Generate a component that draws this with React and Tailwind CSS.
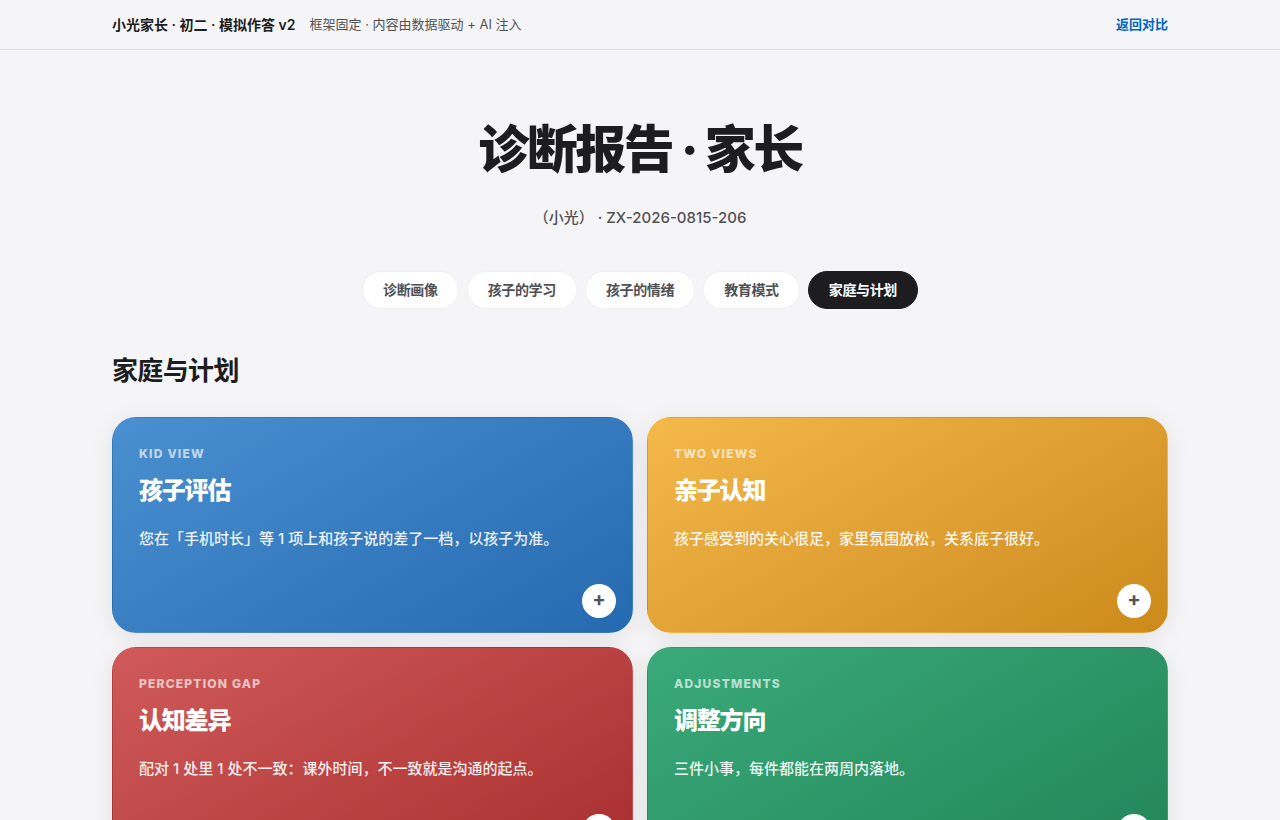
import React, { useState } from 'react';

const tabs = ['诊断画像', '孩子的学习', '孩子的情绪', '教育模式', '家庭与计划'];

const cards = [
  {
    label: 'Kid view',
    title: '孩子评估',
    text: '您在「手机时长」等 1 项上和孩子说的差了一档，以孩子为准。',
    color: 'from-[#4a90d0] to-[#2569b0]',
  },
  {
    label: 'Two views',
    title: '亲子认知',
    text: '孩子感受到的关心很足，家里氛围放松，关系底子很好。',
    color: 'from-[#f5b84a] to-[#cc8a1a]',
  },
  {
    label: 'Perception gap',
    title: '认知差异',
    text: '配对 1 处里 1 处不一致：课外时间，不一致就是沟通的起点。',
    color: 'from-[#d05a5a] to-[#a82e2e]',
  },
  {
    label: 'Adjustments',
    title: '调整方向',
    text: '三件小事，每件都能在两周内落地。',
    color: 'from-[#3aaa7a] to-[#228558]',
  },
];

const Card = ({ card }) => {
  return (
    <article
      className={`relative min-h-[216px] rounded-3xl border border-transparent bg-linear-150 px-[26px] py-7 text-white shadow-[0_4px_24px_rgba(0,0,0,0.08)] ${card.color}`}
    >
      <p className="text-xs leading-4 font-extrabold tracking-widest uppercase opacity-65">{card.label}</p>
      <h3 className="mt-3 text-2xl leading-[34px] font-extrabold tracking-tighter">{card.title}</h3>
      <p className="mt-[18px] text-[15px] leading-[26px] font-medium opacity-90">{card.text}</p>
      <button
        type="button"
        aria-label={`展开${card.title}`}
        className="absolute right-4 bottom-3.5 flex size-[34px] cursor-pointer items-center justify-center rounded-full bg-white pb-1 text-xl leading-none font-bold text-[#515154]"
      >
        +
      </button>
    </article>
  );
};

const App = () => {
  const [activeTab, setActiveTab] = useState('家庭与计划');

  return (
    <div
      lang="zh-CN"
      className="min-h-screen bg-[#f5f5f7] font-[Inter,'Noto_Sans_CJK_SC',sans-serif] text-[#1d1d1f]"
    >
      <header className="border-b border-black/8">
        <div className="mx-auto flex max-w-[1120px] items-center justify-between px-8 py-3.5 text-[13px] leading-[21px]">
          <div className="flex items-center gap-3.5">
            <strong className="text-sm leading-[21px] font-semibold">小光家长 · 初二 · 模拟作答 v2</strong>
            <span className="text-[#515154]">框架固定 · 内容由数据驱动 + AI 注入</span>
          </div>
          <a href="#compare" className="font-semibold text-[#0066c0]">返回对比</a>
        </div>
      </header>

      <main className="mx-auto max-w-[1120px] px-8 pb-16">
        <section className="pt-[72px] text-center">
          <h1 className="text-[51px] leading-14 font-extrabold tracking-tighter">诊断报告 · 家长</h1>
          <p className="mt-7 text-[15px] leading-6 font-medium text-[#515154]">（小光） · ZX-2026-0815-206</p>
        </section>

        <nav className="mt-[41px] flex flex-wrap justify-center gap-2">
          {tabs.map((tab) => (
            <button
              key={tab}
              type="button"
              onClick={() => setActiveTab(tab)}
              className={`cursor-pointer rounded-full border px-5 py-2 text-sm font-semibold tracking-tight ${
                activeTab === tab
                  ? 'border-[#1d1d1f] bg-[#1d1d1f] text-white'
                  : 'border-black/6 bg-white text-[#515154]'
              }`}
            >
              {tab}
            </button>
          ))}
        </nav>

        <h2 className="mt-11 text-[26px] leading-9 font-bold tracking-tight">{activeTab}</h2>

        <div className="mt-7 grid grid-cols-1 gap-3.5 md:grid-cols-2">
          {cards.map((card) => (
            <Card key={card.title} card={card} />
          ))}
        </div>
      </main>
    </div>
  );
};

export default App;
